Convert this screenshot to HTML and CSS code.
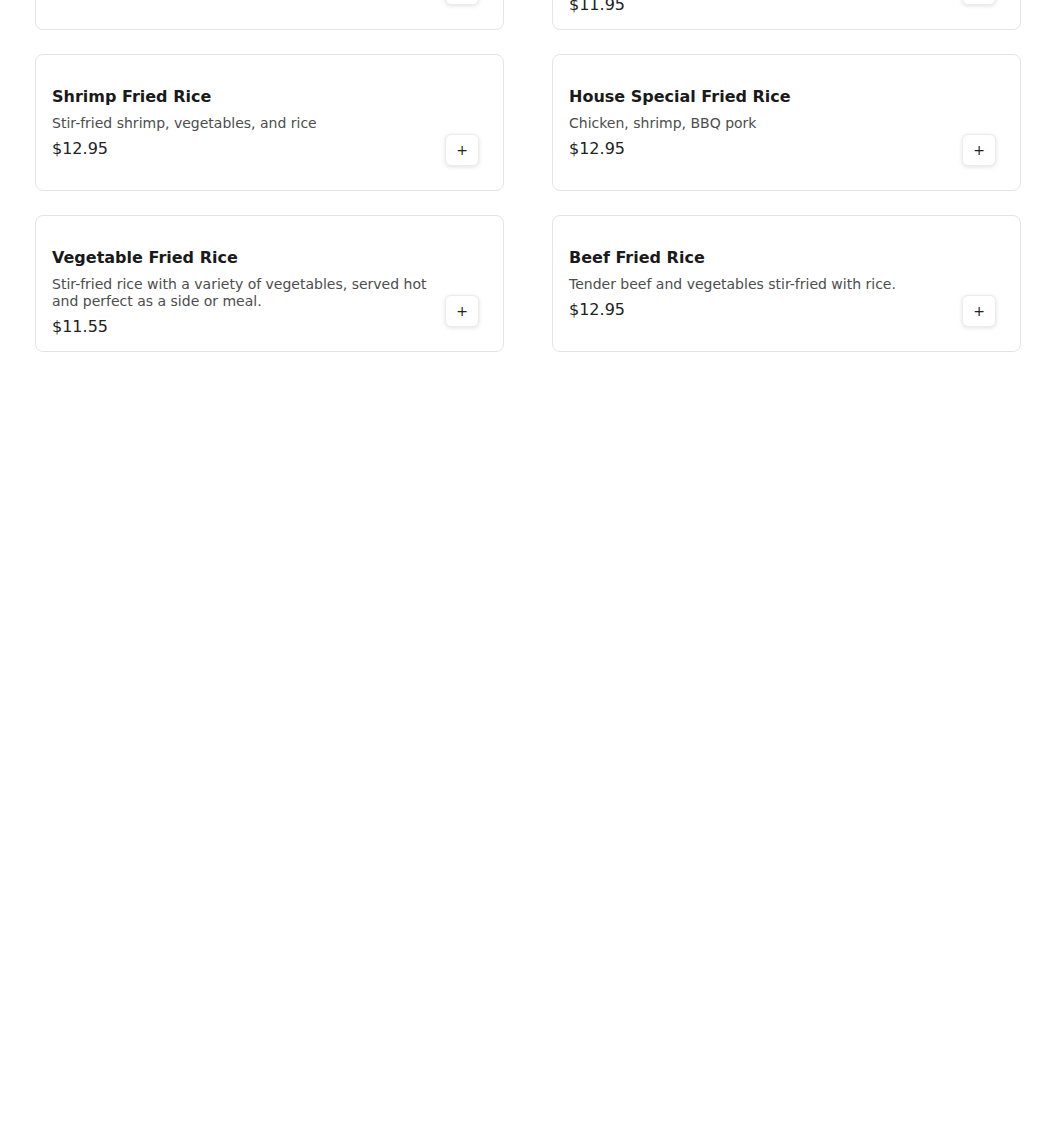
FILE: index.html
```html
<!DOCTYPE html>
<html lang="en">
<head>
  <meta charset="UTF-8" />
  <title>Fried Rice - Menu</title>
  <link rel="stylesheet" href="styles.css">
</head>
<body>

  <!-- Menu section (page is scrolled a little) -->
  <main class="menu-section">
    <div class="menu-grid">

      <div class="menu-card">
        <div class="item-info">
          <h3 class="item-name">Chicken Fried Rice</h3>
          <p class="item-desc">Stir-fried chicken, vegetables, and rice</p>
          <div class="item-price">$11.95</div>
        </div>
        <button class="add-btn" aria-label="Add">+</button>
      </div>

      <div class="menu-card">
        <div class="item-info">
          <h3 class="item-name">BBQ Pork Fried Rice</h3>
          <p class="item-desc">Fried rice with roasted BBQ pork, egg and green onions, a classic favourite.</p>
          <div class="item-price">$11.95</div>
        </div>
        <button class="add-btn" aria-label="Add">+</button>
      </div>

      <div class="menu-card">
        <div class="item-info">
          <h3 class="item-name">Shrimp Fried Rice</h3>
          <p class="item-desc">Stir-fried shrimp, vegetables, and rice</p>
          <div class="item-price">$12.95</div>
        </div>
        <button class="add-btn" aria-label="Add">+</button>
      </div>

      <div class="menu-card">
        <div class="item-info">
          <h3 class="item-name">House Special Fried Rice</h3>
          <p class="item-desc">Chicken, shrimp, BBQ pork</p>
          <div class="item-price">$12.95</div>
        </div>
        <button class="add-btn" aria-label="Add">+</button>
      </div>

      <div class="menu-card">
        <div class="item-info">
          <h3 class="item-name">Vegetable Fried Rice</h3>
          <p class="item-desc">Stir-fried rice with a variety of vegetables, served hot and perfect as a side or meal.</p>
          <div class="item-price">$11.55</div>
        </div>
        <button class="add-btn" aria-label="Add">+</button>
      </div>

      <div class="menu-card">
        <div class="item-info">
          <h3 class="item-name">Beef Fried Rice</h3>
          <p class="item-desc">Tender beef and vegetables stir-fried with rice.</p>
          <div class="item-price">$12.95</div>
        </div>
        <button class="add-btn" aria-label="Add">+</button>
      </div>

    </div>
  </main>

</body>
</html>
```

FILE: styles.css
```css
* {
  margin: 0;
  padding: 0;
  box-sizing: border-box;
}

body {
  background: #ffffff;
  font-family: "DejaVu Sans", Verdana, sans-serif;
  color: #1a1a1a;
  overflow: hidden;
}

.menu-section {
  padding: 0 29px 0 35px;
  margin-top: -107px;
}

.menu-grid {
  display: grid;
  grid-template-columns: 1fr 1fr;
  column-gap: 48px;
  row-gap: 24px;
}

.menu-card {
  display: flex;
  align-items: flex-start;
  gap: 16px;
  min-height: 137px;
  padding: 16px 24px 12px 16px;
  border: 1px solid #e4e4e4;
  border-radius: 8px;
  background: #fff;
}

.item-info {
  flex: 1;
  min-width: 0;
}

.item-name {
  margin-top: 15px;
  font-size: 16px;
  line-height: 22px;
  font-weight: bold;
  color: #1a1a1a;
}

.item-desc {
  margin-top: 7px;
  font-size: 14px;
  line-height: 17px;
  color: #4d4d4d;
}

.item-price {
  margin-top: 5px;
  font-size: 16px;
  line-height: 24px;
  color: #222;
}

.add-btn {
  flex: none;
  width: 34px;
  height: 32px;
  margin-top: 63px;
  border: 1px solid #ececec;
  border-radius: 6px;
  background: #fff;
  box-shadow: 0 1px 4px rgba(0, 0, 0, 0.12);
  font-family: "DejaVu Sans", sans-serif;
  font-size: 14px;
  line-height: 1;
  color: #222;
  cursor: pointer;
}
```
